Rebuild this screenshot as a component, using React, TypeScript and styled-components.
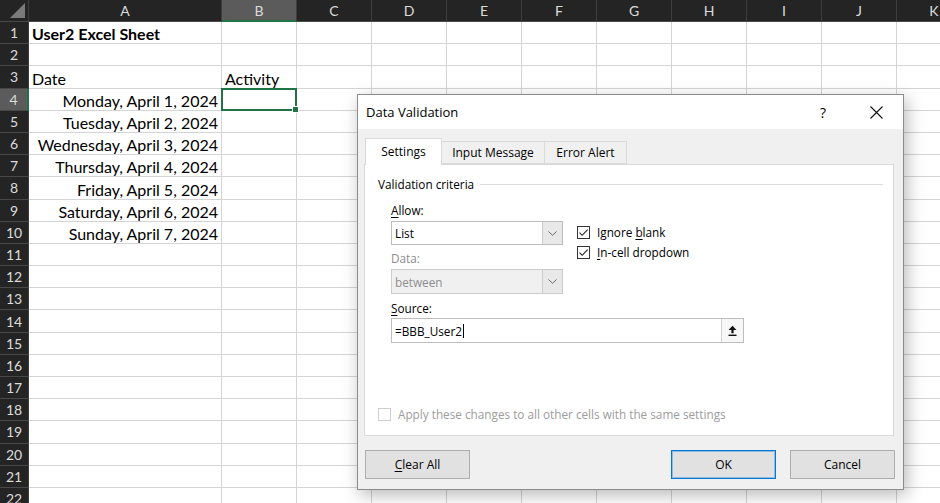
import { Fragment, ReactNode } from 'react';
import styled, { createGlobalStyle } from 'styled-components';

const CELL_FONT = `Lato, "Liberation Sans", sans-serif`;
const UI_FONT = `"Open Sans", "Noto Sans", sans-serif`;
const GREEN = '#217346';

const GlobalStyle = createGlobalStyle`
  html, body {
    margin: 0;
    padding: 0;
    background: #ffffff;
    overflow: hidden;
  }
`;

const Page = styled.div`
  position: relative;
  width: 940px;
  height: 503px;
  overflow: hidden;
`;

/* ---------- sheet ---------- */

const Sheet = styled.div`
  display: grid;
  grid-template-columns: 29px 193px repeat(10, 75px);
  grid-template-rows: 22px;
  grid-auto-rows: 22.2px;
  font-family: ${CELL_FONT};
`;

const Corner = styled.div`
  background: #242424;
  border-right: 1px solid #3d3d3d;
  border-bottom: 1px solid #4a4a4a;
  display: flex;
  align-items: flex-end;
  justify-content: flex-end;
  padding: 0 3px 3px 0;
`;

const ColHeader = styled.div<{ $active?: boolean }>`
  background: ${p => (p.$active ? '#5b5b5b' : '#242424')};
  color: #dcdcdc;
  font-size: 14px;
  display: flex;
  align-items: center;
  justify-content: center;
  border-right: 1px solid #3d3d3d;
  border-bottom: ${p => (p.$active ? `2px solid ${GREEN}` : '1px solid #4a4a4a')};
  box-sizing: border-box;
`;

const RowHeader = styled.div<{ $active?: boolean }>`
  background: ${p => (p.$active ? '#5b5b5b' : '#242424')};
  color: #dcdcdc;
  font-size: 14px;
  display: flex;
  align-items: center;
  justify-content: center;
  border-bottom: 1px solid #484848;
  border-right: ${p => (p.$active ? `2px solid ${GREEN}` : '1px solid #3d3d3d')};
  box-sizing: border-box;
`;

const Cell = styled.div<{ $align?: 'left' | 'right'; $bold?: boolean }>`
  position: relative;
  display: flex;
  align-items: flex-end;
  justify-content: ${p => (p.$align === 'right' ? 'flex-end' : 'flex-start')};
  padding: 0 3px 0;
  border-right: 1px solid #d4d4d4;
  border-bottom: 1px solid #d4d4d4;
  box-sizing: border-box;
  font-size: 16px;
  font-weight: ${p => (p.$bold ? 700 : 400)};
  color: #000;
  white-space: nowrap;
  line-height: 18px;
`;

const SelectedCell = styled(Cell)`
  &::after {
    content: '';
    position: absolute;
    left: -1px;
    top: -1px;
    right: -1px;
    bottom: -1px;
    border: 2px solid ${GREEN};
  }
  &::before {
    content: '';
    position: absolute;
    right: -3px;
    bottom: -3px;
    width: 5px;
    height: 5px;
    background: ${GREEN};
    border: 1px solid #fff;
    z-index: 1;
  }
`;

const COLS = ['A', 'B', 'C', 'D', 'E', 'F', 'G', 'H', 'I', 'J', 'K'];

type CellData = { text: string; align?: 'left' | 'right'; bold?: boolean };

const DATA: Record<number, Record<string, CellData>> = {
  1: { A: { text: 'User2 Excel Sheet', bold: true } },
  3: { A: { text: 'Date' }, B: { text: 'Activity' } },
  4: { A: { text: 'Monday, April 1, 2024', align: 'right' } },
  5: { A: { text: 'Tuesday, April 2, 2024', align: 'right' } },
  6: { A: { text: 'Wednesday, April 3, 2024', align: 'right' } },
  7: { A: { text: 'Thursday, April 4, 2024', align: 'right' } },
  8: { A: { text: 'Friday, April 5, 2024', align: 'right' } },
  9: { A: { text: 'Saturday, April 6, 2024', align: 'right' } },
  10: { A: { text: 'Sunday, April 7, 2024', align: 'right' } },
};

const Spreadsheet = () => {
  const rows = Array.from({ length: 22 }, (_, i) => i + 1);
  return (
    <Sheet>
      <Corner>
        <svg width="15" height="15" viewBox="0 0 15 15">
          <polygon points="15,0 15,15 0,15" fill="#7a7a7a" />
        </svg>
      </Corner>
      {COLS.map(c => (
        <ColHeader key={c} $active={c === 'B'}>{c}</ColHeader>
      ))}
      {rows.map(r => (
        <Fragment key={r}>
          <RowHeader $active={r === 4}>{r}</RowHeader>
          {COLS.map(c => {
            const d = DATA[r]?.[c];
            const Comp = r === 4 && c === 'B' ? SelectedCell : Cell;
            return (
              <Comp key={c} $align={d?.align} $bold={d?.bold}>{d?.text}</Comp>
            );
          })}
        </Fragment>
      ))}
    </Sheet>
  );
};

/* ---------- dialog ---------- */

const Dialog = styled.div`
  position: absolute;
  left: 357px;
  top: 94px;
  width: 547px;
  height: 396px;
  box-sizing: border-box;
  background: #f0f0f0;
  border: 1px solid #8c8c8c;
  box-shadow: 3px 5px 16px rgba(0, 0, 0, 0.28);
  display: flex;
  flex-direction: column;
  font-family: ${UI_FONT};
  font-size: 11.75px;
  color: #000;
`;

const TitleBar = styled.div`
  height: 34px;
  background: #fff;
  display: flex;
  align-items: center;
  padding-left: 8px;
  padding-right: 4px;
`;

const Title = styled.div`
  flex: 1;
  font-size: 13px;
`;

const TitleButton = styled.div`
  width: 46px;
  height: 34px;
  display: flex;
  align-items: center;
  justify-content: center;
  font-size: 14px;
  & + & {
    margin-left: 7px;
  }
`;

const Body = styled.div`
  flex: 1;
  padding: 9px 9px 0 6px;
  display: flex;
  flex-direction: column;
`;

const Tabs = styled.div`
  display: flex;
  align-items: flex-start;
  padding-left: 1px;
  height: 26px;
`;

const Tab = styled.div<{ $selected?: boolean; $w: number }>`
  width: ${p => p.$w}px;
  height: ${p => (p.$selected ? 27 : 23)}px;
  margin-top: ${p => (p.$selected ? 0 : 3)}px;
  box-sizing: border-box;
  display: flex;
  align-items: center;
  justify-content: center;
  background: ${p => (p.$selected ? '#fff' : '#f0f0f0')};
  border: 1px solid #d9d9d9;
  border-bottom: ${p => (p.$selected ? 'none' : '1px solid #d9d9d9')};
  border-left: ${p => (p.$selected ? '1px solid #d9d9d9' : 'none')};
  position: relative;
  z-index: ${p => (p.$selected ? 1 : 0)};
  font-size: 12px;
  padding-bottom: ${p => (p.$selected ? 2 : 0)}px;
`;

const Panel = styled.div`
  height: 272px;
  box-sizing: border-box;
  background: #fff;
  border: 1px solid #d9d9d9;
  padding: 11px 10px 0 13px;
  display: flex;
  flex-direction: column;
`;

const Legend = styled.div`
  display: flex;
  align-items: center;
  gap: 6px;
  line-height: 16px;
  &::after {
    content: '';
    flex: 1;
    height: 1px;
    background: #dcdcdc;
  }
`;

const Criteria = styled.div`
  display: grid;
  grid-template-columns: 172px 1fr;
  column-gap: 14px;
  margin-left: 13px;
  margin-top: 10px;
`;

const Column = styled.div`
  display: flex;
  flex-direction: column;
`;

const SourceBlock = styled(Column)`
  grid-column: 1 / -1;
`;

const Label = styled.div<{ $disabled?: boolean; $gap?: number }>`
  line-height: 16px;
  margin-top: ${p => p.$gap ?? 0}px;
  color: ${p => (p.$disabled ? '#8d8d8d' : '#000')};
`;

const Combo = styled.div<{ $disabled?: boolean }>`
  margin-top: 3px;
  width: 172px;
  height: ${p => (p.$disabled ? 25 : 24)}px;
  box-sizing: border-box;
  border: 1px solid ${p => (p.$disabled ? '#cccccc' : '#bdbdbd')};
  background: ${p => (p.$disabled ? '#f0f0f0' : '#fff')};
  color: ${p => (p.$disabled ? '#8d8d8d' : '#000')};
  display: flex;
  align-items: stretch;
`;

const ComboText = styled.div`
  flex: 1;
  display: flex;
  align-items: center;
  padding-left: 3px;
`;

const ComboButton = styled.div`
  width: 19px;
  border-left: 1px solid #cccccc;
  background: #e8e8e8;
  display: flex;
  align-items: center;
  justify-content: center;
`;

const Checks = styled.div`
  display: flex;
  flex-direction: column;
  margin-top: 20px;
`;

const CheckRow = styled.div<{ $disabled?: boolean }>`
  height: 20px;
  display: flex;
  align-items: center;
  gap: 7px;
  color: ${p => (p.$disabled ? '#9c9c9c' : '#000')};
`;

const Box = styled.div<{ $disabled?: boolean }>`
  width: 13px;
  height: 13px;
  box-sizing: border-box;
  border: 1px solid ${p => (p.$disabled ? '#cfcfcf' : '#333')};
  background: #fff;
  display: flex;
  align-items: center;
  justify-content: center;
`;

const SourceInput = styled.div`
  margin-top: 2px;
  width: 353px;
  height: 25px;
  box-sizing: border-box;
  border: 1px solid #bdbdbd;
  display: flex;
  align-items: stretch;
`;

const SourceText = styled.div`
  flex: 1;
  display: flex;
  align-items: center;
  padding-left: 3px;
`;

const Caret = styled.span`
  display: inline-block;
  width: 1px;
  height: 14px;
  background: #000;
  margin-left: 1px;
`;

const CollapseButton = styled.div`
  width: 21px;
  border-left: 1px solid #d0d0d0;
  background: #f7f7f7;
  display: flex;
  align-items: center;
  justify-content: center;
`;

const ApplyRow = styled(CheckRow)`
  margin-top: 61px;
`;

const Footer = styled.div`
  display: flex;
  align-items: center;
  margin-top: 14px;
  margin-right: -1px;
  padding-left: 1px;
  gap: 14px;
`;

const Spacer = styled.div`
  flex: 1;
`;

const Button = styled.div<{ $default?: boolean }>`
  width: 105px;
  height: 29px;
  box-sizing: border-box;
  background: #e1e1e1;
  border: 1px solid ${p => (p.$default ? '#0078d7' : '#adadad')};
  box-shadow: ${p => (p.$default ? 'inset 0 0 0 1px rgba(0, 120, 215, 0.35)' : 'none')};
  display: flex;
  align-items: center;
  justify-content: center;
  font-size: 12px;
`;

const U = styled.span`
  text-decoration: underline;
  text-underline-offset: 2px;
`;

const CheckMark = () => (
  <svg width="11" height="11" viewBox="0 0 11 11">
    <path d="M1.5 5.6 L4.2 8.3 L9.6 2.6" fill="none" stroke="#222" strokeWidth="1.1" />
  </svg>
);

const Chevron = () => (
  <svg width="9" height="5" viewBox="0 0 9 5">
    <path d="M0.5 0.5 L4.5 4.3 L8.5 0.5" fill="none" stroke="#6a6a6a" strokeWidth="1" />
  </svg>
);

const CollapseIcon = () => (
  <svg width="9" height="12" viewBox="0 0 9 12">
    <path d="M4.5 0.8 L8.5 5 L5.6 5 L5.6 8.3 L3.4 8.3 L3.4 5 L0.5 5 Z" fill="#111" />
    <rect x="0.5" y="9.6" width="8" height="1.4" fill="#111" />
  </svg>
);

const CloseIcon = () => (
  <svg width="13" height="13" viewBox="0 0 13 13">
    <path d="M0.5 0.5 L12.5 12.5 M12.5 0.5 L0.5 12.5" stroke="#111" strokeWidth="1.1" />
  </svg>
);

const Check = ({ checked, disabled, children }: { checked?: boolean; disabled?: boolean; children?: ReactNode }) => (
  <CheckRow $disabled={disabled}>
    <Box $disabled={disabled}>{checked && <CheckMark />}</Box>
    <span>{children}</span>
  </CheckRow>
);

const DataValidation = () => (
  <Dialog>
    <TitleBar>
      <Title>Data Validation</Title>
      <TitleButton>?</TitleButton>
      <TitleButton><CloseIcon /></TitleButton>
    </TitleBar>
    <Body>
      <Tabs>
        <Tab $selected $w={77}>Settings</Tab>
        <Tab $w={103}>Input Message</Tab>
        <Tab $w={82}>Error Alert</Tab>
      </Tabs>
      <Panel>
        <Legend>Validation criteria</Legend>
        <Criteria>
          <Column>
            <Label><U>A</U>llow:</Label>
            <Combo>
              <ComboText>List</ComboText>
              <ComboButton><Chevron /></ComboButton>
            </Combo>
            <Label $disabled $gap={5}>Data:</Label>
            <Combo $disabled>
              <ComboText>between</ComboText>
              <ComboButton><Chevron /></ComboButton>
            </Combo>
          </Column>
          <Checks>
            <Check checked>Ignore <U>b</U>lank</Check>
            <Check checked><U>I</U>n-cell dropdown</Check>
          </Checks>
          <SourceBlock>
            <Label $gap={6}><U>S</U>ource:</Label>
            <SourceInput>
              <SourceText>=BBB_User2<Caret /></SourceText>
              <CollapseButton><CollapseIcon /></CollapseButton>
            </SourceInput>
          </SourceBlock>
        </Criteria>
        <ApplyRow $disabled>
          <Box $disabled />
          <span>Apply these changes to all other cells with the same settings</span>
        </ApplyRow>
      </Panel>
      <Footer>
        <Button><span><U>C</U>lear All</span></Button>
        <Spacer />
        <Button $default>OK</Button>
        <Button>Cancel</Button>
      </Footer>
    </Body>
  </Dialog>
);

export default function App() {
  return (
    <Page>
      <GlobalStyle />
      <Spreadsheet />
      <DataValidation />
    </Page>
  );
}
